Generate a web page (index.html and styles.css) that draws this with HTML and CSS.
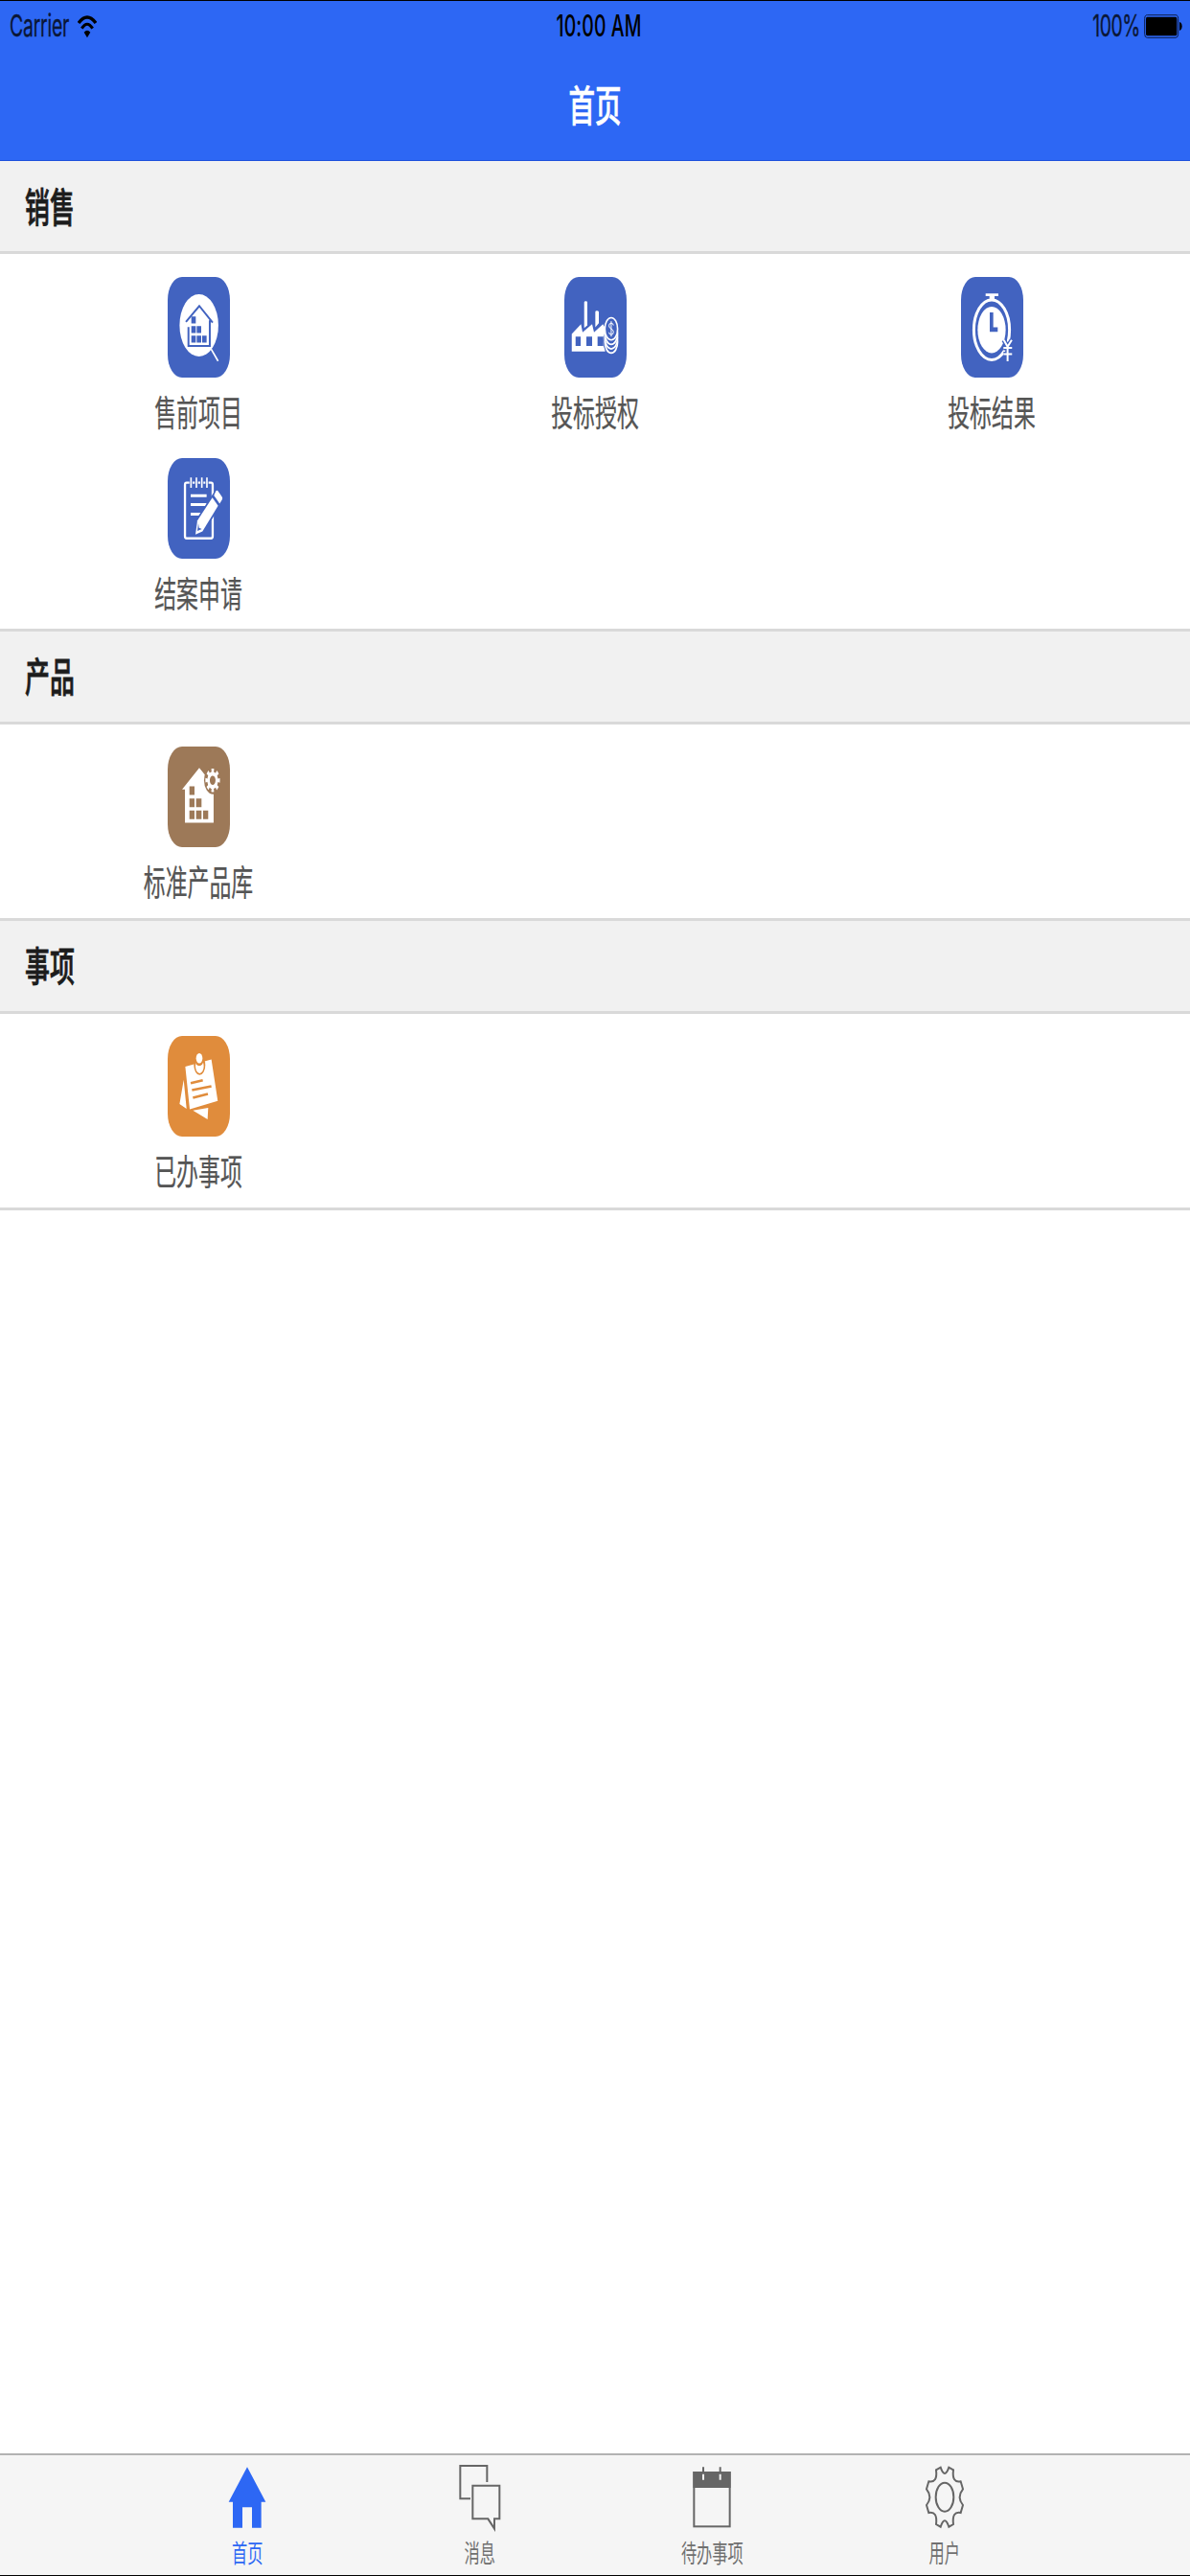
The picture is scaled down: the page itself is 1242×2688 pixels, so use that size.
FILE: index.html
```html
<!DOCTYPE html>
<html lang="zh-CN">
<head>
    <meta charset="UTF-8">
    <meta name="viewport" content="width=device-width, initial-scale=1.0">
    <title>首页</title>
    <link rel="stylesheet" href="styles.css">
</head>
<body>
    <header class="header">
        <div class="status-bar">
            <div class="status-left">
                <span class="text carrier">Carrier</span>
                <svg class="wifi" viewBox="0 0 60 72">
                    <path d="M3 24Q30-12 57 24" fill="none" stroke="#000" stroke-width="10"/>
                    <path d="M13 41Q30 14 47 41" fill="none" stroke="#000" stroke-width="9"/>
                    <path d="M20 53Q30 42 40 53L30 70Z"/>
                </svg>
            </div>
            <span class="text time">10:00 AM</span>
            <div class="status-right">
                <span class="text percent">100%</span>
                <svg class="battery" viewBox="0 0 120 75">
                    <rect x="2" y="2" width="105" height="71" rx="8" ry="12" fill="none" stroke="#0c1f50" stroke-width="3"/>
                    <rect x="6" y="8" width="97" height="59" rx="4" ry="6"/>
                    <path d="M111 24Q119 26 119 37T111 51Z"/>
                </svg>
            </div>
        </div>
        <div class="nav-bar"><h1 class="text nav-title">首页</h1></div>
    </header>

    <main class="content">
        <section class="section">
            <div class="section-head"><h2 class="text section-title">销售</h2></div>
            <div class="grid">
                <a class="item">
                    <svg class="item-icon blue" viewBox="0 0 195 316">
                        <ellipse cx="98" cy="152" rx="61" ry="98" fill="#fff"/>
                        <path d="M57 141L99 91L141 143M65 157V217H132V136" fill="none" stroke="#4263c0" stroke-width="6"/>
                        <path d="M74 124h14v22h-14zM74 154h14v22h-14zM91 154h14v22h-14zM74 184h14v22h-14zM91 184h14v22h-14zM108 184h14v22h-14z" fill="#4263c0"/>
                        <path d="M136 226L158 264" stroke="#fff" stroke-width="5"/>
                    </svg>
                    <span class="text item-label">售前项目</span>
                </a>
                <a class="item">
                    <svg class="item-icon blue" viewBox="0 0 195 316">
                        <path d="M23 179L52 148L57 174L87 148L93 174L121 148L128 160V234H23Z" fill="#fff"/>
                        <path d="M62 80q0-4 5-4t5 4V152L62 160ZM97 110q0-4 5-4t6 4V145L97 158Z" fill="#fff"/>
                        <path d="M35 187h16v30h-16zM69 187h18v30h-18zM104 187h18v30h-18z" fill="#4263c0"/>
                        <ellipse cx="147" cy="202" rx="26" ry="43" fill="#4263c0"/>
                        <ellipse cx="147" cy="204" rx="20" ry="35" class="coin"/>
                        <ellipse cx="147" cy="191" rx="20" ry="35" class="coin"/>
                        <ellipse cx="147" cy="177" rx="20" ry="35" class="coin"/>
                        <ellipse cx="147" cy="163" rx="20" ry="35" class="coin"/>
                        <path d="M154 152Q153 145 147 145Q140 145 140 153Q140 160 147 163Q154 166 154 173Q154 181 147 181Q140 181 140 174M147 139V187" fill="none" stroke="#fff" stroke-width="3"/>
                    </svg>
                    <span class="text item-label">投标授权</span>
                </a>
                <a class="item">
                    <svg class="item-icon blue" viewBox="0 0 195 316">
                        <path d="M77 52h40v8h-12v14h-16v-14h-12z" fill="#fff"/>
                        <ellipse cx="96" cy="166" rx="56" ry="94" fill="none" stroke="#fff" stroke-width="9"/>
                        <ellipse cx="96" cy="166" rx="44" ry="73" fill="#fff"/>
                        <path d="M90 111h11v47h14v14H90z" fill="#4263c0"/>
                        <path d="M134 198L146 219L159 198M146 219V265M133 223H160M133 242H160" fill="none" stroke="#4263c0" stroke-width="14"/>
                        <path d="M134 198L146 219L159 198M146 219V265M133 223H160M133 242H160" fill="none" stroke="#fff" stroke-width="6"/>
                    </svg>
                    <span class="text item-label">投标结果</span>
                </a>
                <a class="item">
                    <svg class="item-icon blue" viewBox="0 0 195 316">
                        <rect x="54" y="77" width="87" height="175" rx="5" ry="7" fill="none" stroke="#fff" stroke-width="7"/>
                        <path d="M73 61V93M90 61V93M107 61V93M123 61V93" stroke="#4263c0" stroke-width="10"/>
                        <path d="M73 61V93M90 61V93M107 61V93M123 61V93" stroke="#fff" stroke-width="5"/>
                        <path d="M72 118H122M72 146H122M72 176H108" stroke="#fff" stroke-width="9"/>
                        <path d="M155 101L172 126L158 152L108 232L87 239L93 196L140 124Z" fill="#4263c0" stroke="#4263c0" stroke-width="10"/>
                        <path d="M151 104Q155 98 159 105L170 121Q174 126 170 132L163 143L145 117Z" fill="#fff"/>
                        <path d="M140 124L158 150L109 230L87 240L93 196Z" fill="#fff"/>
                        <path d="M96 205L98 219L107 223L93 229Z" fill="#4263c0"/>
                    </svg>
                    <span class="text item-label">结案申请</span>
                </a>
            </div>
        </section>

        <section class="section">
            <div class="section-head"><h2 class="text section-title">产品</h2></div>
            <div class="grid">
                <a class="item">
                    <svg class="item-icon brown" viewBox="0 0 195 316">
                        <path d="M45 135L99 67L144 123V239H54V135Z" fill="#fff"/>
                        <ellipse cx="142" cy="106" rx="28" ry="44" fill="#9d7958"/>
                        <path d="M68 125h16v27h-16zM68 163h16v27h-16zM89 163h17v27h-17zM68 201h16v27h-16zM89 201h17v27h-17zM111 201h16v27h-16z" fill="#9d7958"/>
                        <g transform="translate(141 106) scale(1 1.6) rotate(-11)" fill="none" stroke="#fff">
                            <circle r="13" stroke-width="8"/>
                            <circle r="19" stroke-width="8" pathLength="16" stroke-dasharray="1"/>
                        </g>
                    </svg>
                    <span class="text item-label">标准产品库</span>
                </a>
            </div>
        </section>

        <section class="section">
            <div class="section-head"><h2 class="text section-title">事项</h2></div>
            <div class="grid">
                <a class="item">
                    <svg class="item-icon orange" viewBox="0 0 195 316">
                        <path d="M55 96L137 74L157 204L69 230ZM50 138L37 214L59 229ZM79 234L127 226L125 262Z" fill="#fff"/>
                        <path d="M72 148L110 139M76 170L137 158M79 194L126 182" stroke="#e08c3c" stroke-width="8"/>
                        <ellipse cx="100" cy="92" rx="18" ry="31" fill="#e08c3c"/>
                        <ellipse cx="100" cy="95" rx="13" ry="22" fill="#fff"/>
                        <ellipse cx="99" cy="73" rx="14" ry="21" fill="#e08c3c"/>
                        <ellipse cx="99" cy="70" rx="10" ry="16" fill="#fff"/>
                    </svg>
                    <span class="text item-label">已办事项</span>
                </a>
            </div>
        </section>
    </main>

    <nav class="tab-bar">
        <a class="tab active">
            <svg class="tab-icon" viewBox="0 0 180 216">
                <path d="M90 13L148 122H134V203H105V139H75V203H45V122H32Z" fill="#2d67f4"/>
            </svg>
            <span class="text tab-label">首页</span>
        </a>
        <a class="tab">
            <svg class="tab-icon line" viewBox="0 0 180 216">
                <path d="M112 60V9H28V112H60M67 71H151V175H135V206L115 175H67Z"/>
            </svg>
            <span class="text tab-label">消息</span>
        </a>
        <a class="tab">
            <svg class="tab-icon line" viewBox="0 0 180 216">
                <rect x="34" y="30" width="112" height="169"/>
                <path d="M34 30H146V75H34Z" fill="#666"/>
                <path d="M63 13V34M116 13V34"/>
                <path d="M63 35V53M116 35V53" stroke="#f5f5f5"/>
            </svg>
            <span class="text tab-label">待办事项</span>
        </a>
        <a class="tab">
            <svg class="tab-icon line" viewBox="0 0 180 216">
                <path d="M77 14Q90 52 103 14L117 22Q112 64 140 58L147 82Q127 107 147 132L140 156Q112 150 117 192L103 200Q90 162 77 200L63 192Q68 150 40 156L33 132Q53 107 33 82L40 58Q68 64 63 22Z"/>
                <ellipse cx="90" cy="107" rx="28" ry="45"/>
            </svg>
            <span class="text tab-label">用户</span>
        </a>
    </nav>
</body>
</html>
```

FILE: styles.css
```css
* {
    box-sizing: border-box;
}
body {
    display: flex;
    flex-direction: column;
    height: 2688px;
    margin: 0;
    background-color: #fff;
    font-family: Inter, "Noto Sans CJK SC", sans-serif;
}
/* all type is drawn tall and narrow */
.text {
    display: block;
    margin: 0;
    line-height: 1;
    white-space: nowrap;
    transform: scaleY(1.623);
}

.header {
    height: 168px;
    border-top: 1px solid #000;
    border-bottom: 1px solid #1d50dc;
    background-color: #2d67f4;
}
.status-bar {
    display: grid;
    grid-template-columns: 1fr auto 1fr;
    align-items: center;
    height: 53px;
    padding: 0 8px 0 10px;
    font-size: 19.4px;
}
.status-left, .status-right {
    display: flex;
    align-items: center;
}
.status-left {
    gap: 9px;
}
.status-right {
    justify-content: flex-end;
    gap: 4px;
}
.status-bar .text {
    padding-top: 1px;
}
.carrier, .percent {
    color: #0a1636;
    -webkit-text-stroke: 0.2px #0a1636;
}
.carrier {
    letter-spacing: -0.2px;
}
.percent {
    letter-spacing: -0.4px;
}
.time {
    margin-left: 6px;
    font-weight: 500;
    letter-spacing: 0.1px;
}
.wifi {
    width: 20px;
    height: 24px;
}
.battery {
    width: 40px;
    height: 25px;
}
.nav-bar {
    display: flex;
    align-items: center;
    justify-content: center;
    height: 113px;
    padding-top: 3px;
}
.nav-title {
    color: #fff;
    font-size: 27.5px;
    font-weight: 500;
    -webkit-text-stroke: 0.4px #fff;
}

.content {
    flex: 1;
}
.section-head {
    display: flex;
    align-items: center;
    height: 100px;
    padding: 2px 26px 0;
    border-top: 3px solid #d9d9d9;
    border-bottom: 3px solid #d9d9d9;
    background-color: #f1f1f1;
}
.section:first-child .section-head {
    height: 97px;
    padding-top: 4px;
    border-top: none;
}
.section-title {
    color: #1c1c1c;
    font-size: 25.9px;
    font-weight: 500;
    -webkit-text-stroke: 0.5px #1c1c1c;
}
.grid {
    display: grid;
    grid-template-columns: repeat(3, 1fr);
    grid-auto-rows: 189px;
    padding-top: 13px;
}
.section:last-child .grid {
    border-bottom: 3px solid #d9d9d9;
}
.item {
    display: flex;
    flex-direction: column;
    align-items: center;
    gap: 27px;
    padding-top: 10px;
}
.section:first-child .item {
    padding-top: 11px;
}
.item-icon {
    width: 65px;
    height: 105px;
    border-radius: 15px / 24px;
}
.item-label {
    color: #555;
    font-size: 22.9px;
    -webkit-text-stroke: 0.15px #555;
}
.blue {
    background-color: #4263c0;
}
.brown {
    background-color: #9d7958;
}
.orange {
    background-color: #e08c3c;
}
.coin {
    fill: #4263c0;
    stroke: #fff;
    stroke-width: 5;
}

.tab-bar {
    display: grid;
    grid-template-columns: repeat(4, 1fr);
    height: 128px;
    padding: 8px 135px 0 137px;
    border-top: 2px solid #b2b2b2;
    border-bottom: 1px solid #000;
    background-color: #f5f5f5;
}
.tab {
    display: flex;
    flex-direction: column;
    align-items: center;
    gap: 14px;
    color: #707070;
}
.active {
    color: #2d67f4;
}
.tab-icon {
    width: 60px;
    height: 72px;
}
.line {
    fill: none;
    stroke: #666;
    stroke-width: 6;
}
.tab-label {
    font-size: 16.2px;
}
```
